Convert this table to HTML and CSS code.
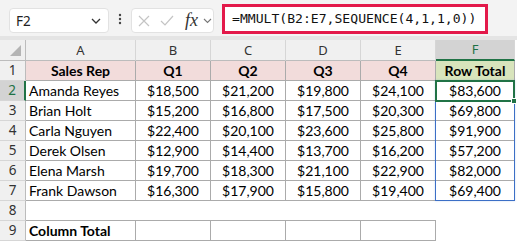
FILE: index.html
```html
<!DOCTYPE html>
<html>
<head>
<meta charset="utf-8">
<link rel="stylesheet" href="styles.css">
</head>
<body>
<div class="toolbar">
  <div class="namebox">
    <span class="nb-text">F2</span>
    <svg class="nb-chev" width="10" height="6" viewBox="0 0 10 6"><polyline points="1,1 5,5 9,1" fill="none" stroke="#333" stroke-width="1.3"/></svg>
  </div>
  <div class="dots">
    <svg width="4" height="12" viewBox="0 0 4 12"><circle cx="2" cy="2" r="1.2" fill="#444"/><circle cx="2" cy="6" r="1.2" fill="#444"/><circle cx="2" cy="10" r="1.2" fill="#444"/></svg>
  </div>
  <div class="fxbox">
    <svg class="ico-x" width="12" height="12" viewBox="0 0 12 12"><path d="M1 1 L11 11 M11 1 L1 11" stroke="#c4c4c4" stroke-width="1.2" fill="none"/></svg>
    <svg class="ico-ok" width="14" height="11" viewBox="0 0 14 11"><polyline points="1,6 5,10 13,1" stroke="#c4c4c4" stroke-width="1.2" fill="none"/></svg>
    <span class="fx">fx</span>
    <svg class="fx-chev" width="9" height="6" viewBox="0 0 9 6"><polyline points="1,1 4.5,4.5 8,1" fill="none" stroke="#777" stroke-width="1.1"/></svg>
  </div>
  <div class="formula">=MMULT(B2:E7,SEQUENCE(4,1,1,0))</div>
</div>
<div class="band"></div>
<div class="sheet">
  <div class="grid">
    <div class="ch corner"><svg width="13" height="12" viewBox="0 0 13 12"><polygon points="12,0 12,11 1,11" fill="#b4b4b4"/></svg></div>
    <div class="ch">A</div><div class="ch">B</div><div class="ch">C</div><div class="ch">D</div><div class="ch">E</div><div class="ch ch-sel">F</div>

    <div class="rh">1</div>
    <div class="c b hd">Sales Rep</div><div class="c b hd">Q1</div><div class="c b hd">Q2</div><div class="c b hd">Q3</div><div class="c b hd">Q4</div><div class="c b hd tot">Row Total</div>

    <div class="rh rh-sel">2</div>
    <div class="c b name">Amanda Reyes</div><div class="c b">$18,500</div><div class="c b">$21,200</div><div class="c b">$19,800</div><div class="c b">$24,100</div><div class="c b">$83,600</div>

    <div class="rh">3</div>
    <div class="c b name">Brian Holt</div><div class="c b">$15,200</div><div class="c b">$16,800</div><div class="c b">$17,500</div><div class="c b">$20,300</div><div class="c b">$69,800</div>

    <div class="rh">4</div>
    <div class="c b name">Carla Nguyen</div><div class="c b">$22,400</div><div class="c b">$20,100</div><div class="c b">$23,600</div><div class="c b">$25,800</div><div class="c b">$91,900</div>

    <div class="rh">5</div>
    <div class="c b name">Derek Olsen</div><div class="c b">$12,900</div><div class="c b">$14,400</div><div class="c b">$13,700</div><div class="c b">$16,200</div><div class="c b">$57,200</div>

    <div class="rh">6</div>
    <div class="c b name">Elena Marsh</div><div class="c b">$19,700</div><div class="c b">$18,300</div><div class="c b">$21,100</div><div class="c b">$22,900</div><div class="c b">$82,000</div>

    <div class="rh">7</div>
    <div class="c b name">Frank Dawson</div><div class="c b">$16,300</div><div class="c b">$17,900</div><div class="c b">$15,800</div><div class="c b">$19,400</div><div class="c b">$69,400</div>

    <div class="rh">8</div>
    <div class="c bb"></div><div class="c bb"></div><div class="c bb"></div><div class="c bb"></div><div class="c bb"></div><div class="c"></div>

    <div class="rh">9</div>
    <div class="c b name hd-l">Column Total</div><div class="c b"></div><div class="c b"></div><div class="c b"></div><div class="c b"></div><div class="c"></div>
  </div>
  <div class="range"></div>
  <div class="active"><span class="handle"></span></div>
</div>
</body>
</html>
```
FILE: styles.css
```css
html, body {
  margin: 0;
  padding: 0;
  background: #ffffff;
  width: 517px;
  height: 242px;
  overflow: hidden;
}

.toolbar {
  height: 36px;
  background: #f3f3f3;
  display: flex;
  align-items: flex-start;
  padding-left: 9px;
  box-sizing: border-box;
}

.namebox {
  margin-top: 8px;
  width: 100px;
  height: 25px;
  box-sizing: border-box;
  background: #fff;
  border: 1px solid #e2e2e2;
  border-radius: 4px;
  display: flex;
  align-items: center;
  justify-content: space-between;
  padding: 0 7px 0 6px;
  font-family: "Noto Sans", "Open Sans", sans-serif;
  font-size: 13.5px;
  color: #222;
}

.nb-chev { display: block; }

.dots {
  width: 22px;
  height: 36px;
  display: flex;
  align-items: center;
  justify-content: center;
  padding-top: 1px;
  box-sizing: border-box;
}

.dots svg { display: block; }

.fxbox {
  margin-top: 8px;
  width: 83px;
  height: 25px;
  box-sizing: border-box;
  background: #fff;
  border: 1px solid #e2e2e2;
  border-radius: 4px;
  display: flex;
  align-items: center;
  padding-left: 6px;
}

.ico-x { margin-right: 10px; }
.ico-ok { margin-right: 11px; }

.fx {
  font-family: "Liberation Serif", serif;
  font-style: italic;
  font-size: 18px;
  color: #333;
  line-height: 1;
  margin-top: -2px;
  margin-right: 5px;
}

.formula {
  margin-left: 8px;
  margin-top: 4px;
  width: 266px;
  height: 30px;
  box-sizing: border-box;
  border: 3px solid #e3194a;
  background: #fff;
  font-family: "DejaVu Sans Mono", "Liberation Mono", monospace;
  font-size: 13.1px;
  line-height: 24px;
  padding-left: 7px;
  color: #111;
  white-space: nowrap;
}

.band {
  height: 4px;
  background: #e4e4e4;
}

.sheet {
  position: relative;
}

.grid {
  display: grid;
  grid-template-columns: 26px 110px 75px 75px 75px 75px 79px;
  grid-template-rows: 21px repeat(9, 20px);
}

.ch {
  background: #f0f0f0;
  border-right: 1px solid #d6d6d6;
  border-bottom: 1px solid #bcbcbc;
  box-sizing: border-box;
  font-family: "Noto Sans", "Open Sans", sans-serif;
  font-size: 13px;
  color: #333;
  text-align: center;
  line-height: 20px;
}

.corner {
  display: flex;
  align-items: flex-end;
  justify-content: flex-end;
  padding: 0 3px 3px 0;
  border-right-color: #bcbcbc;
}

.corner svg { display: block; }

.ch-sel {
  background: #d3d3d3;
  color: #1e7145;
  border-bottom: 2px solid #217346;
  line-height: 19px;
}

.rh {
  background: #f0f0f0;
  border-right: 1px solid #bcbcbc;
  border-bottom: 1px solid #d6d6d6;
  box-sizing: border-box;
  font-family: "Noto Sans", "Open Sans", sans-serif;
  font-size: 13.5px;
  color: #333;
  text-align: center;
  line-height: 19px;
}

.rh-sel {
  background: #d3d3d3;
  color: #1e7145;
  border-right: 2px solid #217346;
}

.c {
  box-sizing: border-box;
  font-family: "Lato", "Liberation Sans", sans-serif;
  font-size: 14px;
  color: #000;
  text-align: center;
  line-height: 19px;
  white-space: nowrap;
  overflow: hidden;
}

.b {
  border-right: 1px solid #ababab;
  border-bottom: 1px solid #ababab;
}

.bb {
  border-bottom: 1px solid #ababab;
}

.name {
  text-align: left;
  padding-left: 3px;
}

.hd {
  background: #f2dcdb;
  font-weight: bold;
}

.hd-l {
  font-weight: bold;
}

.tot {
  background: #d8e4bc;
}

.range {
  position: absolute;
  left: 435px;
  top: 40px;
  width: 80px;
  height: 121px;
  box-sizing: border-box;
  border: 1px solid #3c6fc6;
  box-shadow: 0 0 2px rgba(60, 111, 198, 0.25);
  pointer-events: none;
}

.active {
  position: absolute;
  left: 435px;
  top: 40px;
  width: 80px;
  height: 22px;
  box-sizing: border-box;
  border: 2px solid #217346;
  pointer-events: none;
}

.handle {
  position: absolute;
  right: -4px;
  bottom: -4px;
  width: 6px;
  height: 6px;
  background: #217346;
  border: 1px solid #fff;
  box-sizing: border-box;
}
```
